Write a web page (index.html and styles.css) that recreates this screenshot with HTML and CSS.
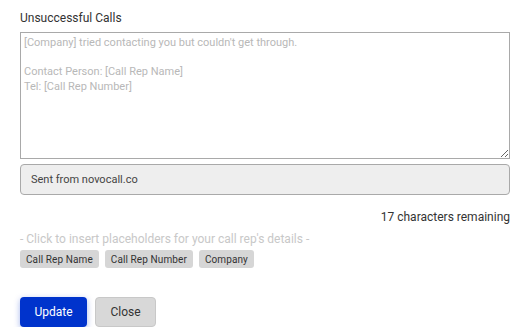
FILE: index.html
```html
<!DOCTYPE html>
<html lang="en">
<head>
  <meta charset="UTF-8">
  <meta name="viewport" content="width=device-width, initial-scale=1.0">
  <title>Unsuccessful Calls</title>
  <link rel="stylesheet" href="styles.css">
</head>
<body>
  <div class="panel">
    <label class="field-label" for="message">Unsuccessful Calls</label>
    <textarea id="message" class="message" placeholder="[Company] tried contacting you but couldn't get through.

Contact Person: [Call Rep Name]
Tel: [Call Rep Number]"></textarea>
    <div class="signature">Sent from novocall.co</div>
    <div class="counter">17 characters remaining</div>
    <p class="hint">- Click to insert placeholders for your call rep's details -</p>
    <div class="chips">
      <button class="chip">Call Rep Name</button>
      <button class="chip">Call Rep Number</button>
      <button class="chip">Company</button>
    </div>
    <div class="actions">
      <button class="button primary">Update</button>
      <button class="button secondary">Close</button>
    </div>
  </div>
</body>
</html>
```

FILE: styles.css
```css
body {
  margin: 0;
  font-family: Roboto, "Liberation Sans", Arial, sans-serif;
  font-size: 12px;
  color: #333;
  background-color: white;
}
.panel {
  display: flex;
  flex-direction: column;
  width: 490px;
  padding: 10px 19px 0 20px;
}
.field-label {
  line-height: 16px;
  margin-bottom: 6px;
}
.message {
  box-sizing: border-box;
  width: 100%;
  height: 127px;
  margin: 0;
  padding: 3px 3px;
  border: 1px solid #a9a9a9;
  font-family: inherit;
  font-size: 11px;
  line-height: 14.5px;
  color: #333;
}
.message::placeholder {
  color: #b8b8b8;
}
.signature {
  box-sizing: border-box;
  height: 31px;
  margin-top: 5px;
  padding: 0 10px;
  border: 1px solid #a9a9a9;
  border-radius: 4px;
  background-color: #eee;
  font-size: 11px;
  line-height: 29px;
  color: #444;
}
.counter {
  margin-top: 14px;
  line-height: 16px;
  text-align: right;
  color: #333;
}
.hint {
  margin: 6px 0 0;
  line-height: 16px;
  color: #c8c8c8;
}
.chips {
  display: flex;
  gap: 6px;
  margin-top: 3px;
}
.chip {
  height: 18px;
  padding: 0 6px;
  border: none;
  border-radius: 3px;
  background-color: #d6d6d6;
  font-family: inherit;
  font-size: 10px;
  letter-spacing: 0.1px;
  color: #333;
}
.actions {
  display: flex;
  gap: 8px;
  margin-top: 29px;
}
.button {
  box-sizing: border-box;
  height: 30px;
  border-radius: 4px;
  font-family: inherit;
  font-size: 12px;
  cursor: pointer;
}
.primary {
  width: 67px;
  border: none;
  background-color: #0033cc;
  color: white;
  box-shadow: 0 2px 6px rgba(0, 51, 204, 0.35);
}
.secondary {
  width: 61px;
  border: 1px solid #c8c8c8;
  background-color: #d8d8d8;
  color: #333;
}
```
